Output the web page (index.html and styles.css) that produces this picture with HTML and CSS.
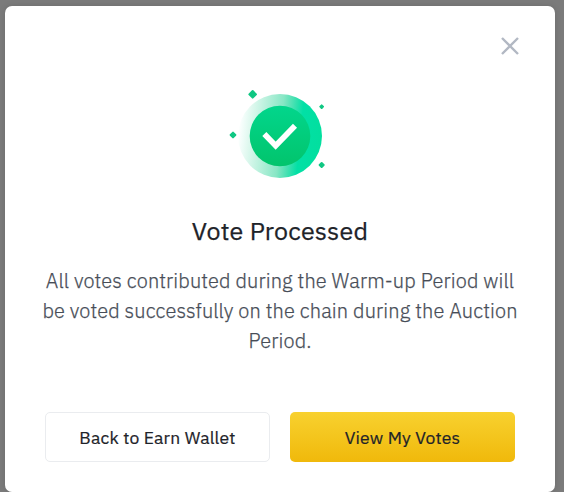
FILE: index.html
```html
<!DOCTYPE html>
<html lang="en">
<head>
<meta charset="utf-8">
<title>Vote Processed</title>
<link rel="stylesheet" href="styles.css">
</head>
<body>
<main class="dialog" role="dialog">
  <header class="dialog-header">
    <svg class="close" viewBox="0 0 20 20" aria-label="Close"><path d="M2 2 18 18M18 2 2 18"/></svg>
  </header>
  <svg class="success" viewBox="0 0 360 330">
    <defs>
      <linearGradient id="halo" x1="0" y1="0.45" x2="1" y2="0.55">
        <stop offset="0" stop-color="#02df9e" stop-opacity="0"/>
        <stop offset="0.12" stop-color="#12ce88" stop-opacity="0.12"/>
        <stop offset="0.5" stop-color="#10ce8b" stop-opacity="0.5"/>
        <stop offset="0.74" stop-color="#02e0a6"/>
        <stop offset="1" stop-color="#02df9e"/>
      </linearGradient>
      <linearGradient id="disc" x1="0" y1="0" x2="0" y2="1">
        <stop offset="0" stop-color="#02d68c"/>
        <stop offset="1" stop-color="#02c46c"/>
      </linearGradient>
    </defs>
    <circle cx="180" cy="168" r="126" fill="url(#halo)"/>
    <circle cx="180" cy="168" r="91" fill="url(#disc)"/>
    <path class="check" d="M133 162 167 197 225 137"/>
    <path class="spark" d="M98 33 108 43 98 53 88 43ZM39 158 46 165 39 172 32 165ZM305 76 309 80 305 84 301 80ZM305 249 311 255 305 261 299 255Z"/>
  </svg>
  <h1 class="title">Vote Processed</h1>
  <p class="message">
    <span class="line">All votes contributed during the Warm-up Period will</span>
    <span class="line">be voted successfully on the chain during the Auction</span>
    <span class="line">Period.</span>
  </p>
  <footer class="actions">
    <button class="button secondary">Back to Earn Wallet</button>
    <button class="button primary">View My Votes</button>
  </footer>
</main>
</body>
</html>
```
FILE: styles.css
```css
* { box-sizing: border-box; }
body {
  margin: 0;
  padding: 6px 9px 0 5px;
  height: 492px;
  overflow: hidden;
  background: #7b7b7b;
  font-family: "IBM Plex Sans", Roboto, sans-serif;
}
.dialog {
  display: flex;
  flex-direction: column;
  height: 486px;
  border-radius: 7px;
  background: #fff;
  box-shadow: 0 0 6px rgba(0, 0, 0, 0.12);
}
.dialog-header {
  display: flex;
  justify-content: flex-end;
  height: 74px;
  padding: 30px 35px 0 0;
}
.close {
  width: 20px;
  height: 20px;
  fill: none;
  stroke: #b2b8c3;
  stroke-width: 2.4;
}
.success {
  width: 120px;
  height: 110px;
  margin-left: 215px;
}
.check {
  fill: none;
  stroke: #fff;
  stroke-width: 17;
}
.spark {
  fill: #10c783;
  stroke: #10c783;
  stroke-width: 6;
  stroke-linejoin: round;
}
.title {
  margin: 21px 0 0;
  font-size: 25px;
  line-height: 40px;
  font-weight: 400;
  text-align: center;
  color: #1e2329;
  letter-spacing: 0.22px;
  -webkit-text-stroke: 0.25px #1e2329;
}
.message {
  margin: 15px 0 0;
  font-size: 20px;
  line-height: 30px;
  font-weight: 300;
  text-align: center;
  white-space: nowrap;
  color: #474d57;
  letter-spacing: 0.12px;
  -webkit-text-stroke: 0.25px #474d57;
}
.line { display: block; }
.actions {
  display: flex;
  gap: 20px;
  margin: 56px 40px 0;
}
.button {
  width: 225px;
  height: 50px;
  padding: 2px 0 0;
  border: 0;
  border-radius: 5px;
  font: 400 17.5px/24px "IBM Plex Sans", Roboto, sans-serif;
  letter-spacing: 0.18px;
  color: #1e2329;
  -webkit-text-stroke: 0.2px #1e2329;
}
.secondary {
  border: 1px solid #eaecef;
  background: #fff;
}
.primary { background: linear-gradient(#f8d12f, #f0b90b); }
```
